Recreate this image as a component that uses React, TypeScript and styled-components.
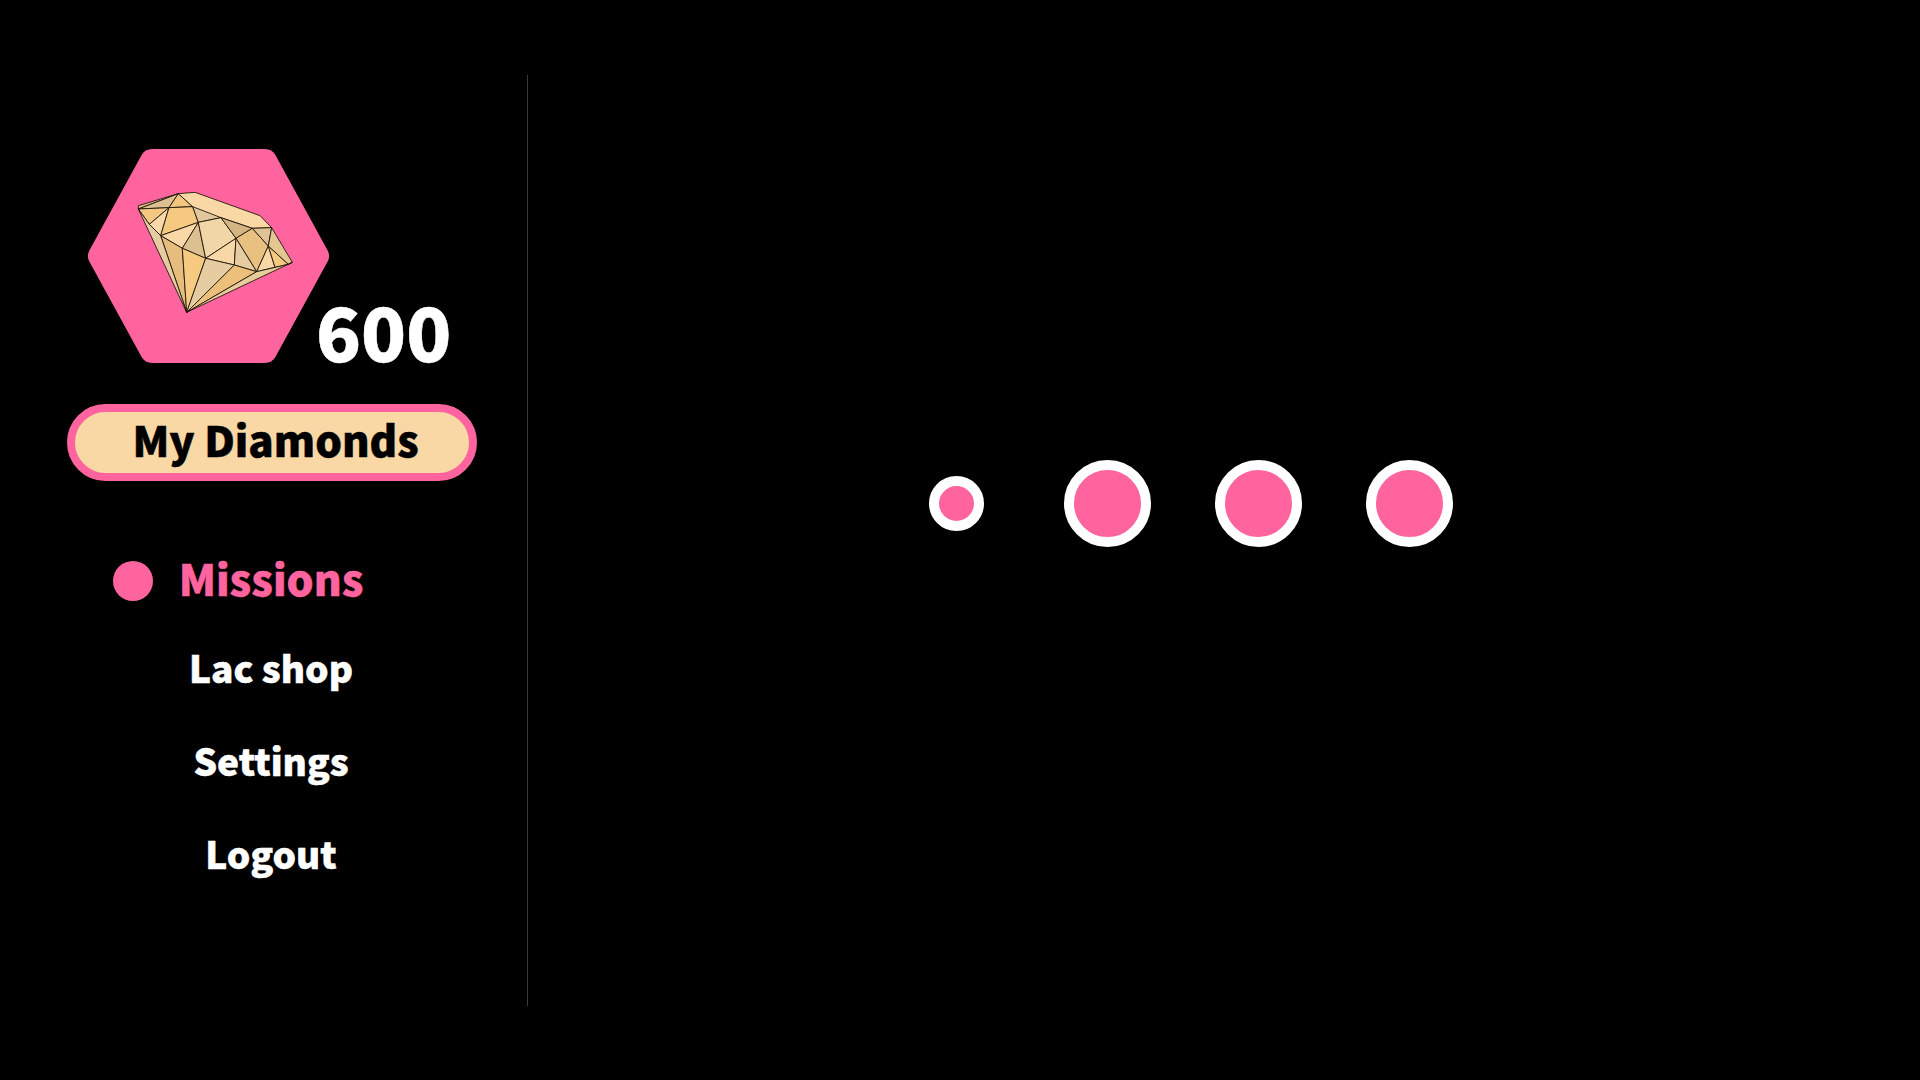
import styled, { createGlobalStyle } from "styled-components"

const PINK = "#ff649f"
const CREAM = "#f9d8a6"

const GlobalStyle = createGlobalStyle`
    html, body {
        margin: 0;
        background: #000;
    }
    * {
        box-sizing: border-box;
    }
`

const Page = styled.div`
    display: flex;
    width: 1920px;
    height: 1080px;
    padding-top: 75px;
    background: #000;
    font-family: "Noto Sans CJK KR", "Noto Sans", sans-serif;
    font-weight: 900;
    -webkit-text-stroke: 0.5px currentColor;
    overflow: hidden;
`

const Sidebar = styled.aside`
    width: 528px;
    height: 931px;
    padding: 74px 0 0 67px;
    border-right: 1px solid #3a3a3a;
    flex-shrink: 0;
`

const Balance = styled.div`
    display: flex;
    align-items: flex-end;
    height: 214px;
    padding-left: 21px;
`

const Count = styled.div`
    margin-left: -13px;
    padding-bottom: 5px;
    color: #fff;
    font-size: 74px;
    line-height: 57px;
`

const Pill = styled.div`
    display: flex;
    align-items: center;
    justify-content: center;
    width: 410px;
    height: 77px;
    margin-top: 41px;
    padding: 0 0 7px 7px;
    border: 8px solid ${PINK};
    border-radius: 39px;
    background: ${CREAM};
    color: #000;
    font-size: 42px;
    line-height: 1;
`

const Nav = styled.nav`
    display: flex;
    flex-direction: column;
    align-items: center;
    width: 410px;
    margin-top: 58px;
`

const NavItem = styled.div<{ $active?: boolean }>`
    position: relative;
    display: flex;
    align-items: center;
    justify-content: center;
    width: 100%;
    height: ${(p) => (p.$active ? "86px" : "93px")};
    padding: 0 2px 9px 0;
    color: ${(p) => (p.$active ? PINK : "#fff")};
    font-size: ${(p) => (p.$active ? "42.5px" : "37px")};
`

const ActiveDot = styled.span`
    position: absolute;
    left: 46px;
    top: 50%;
    width: 40px;
    height: 40px;
    margin-top: -21px;
    border-radius: 50%;
    background: ${PINK};
`

const Main = styled.main`
    flex: 1;
    padding: 385px 0 0 385px;
`

const Steps = styled.div`
    display: flex;
    align-items: center;
    gap: 64px;
`

const Slot = styled.div`
    display: flex;
    align-items: center;
    justify-content: center;
    width: 87px;
    height: 87px;
`

const Step = styled.div<{ $current?: boolean }>`
    width: ${(p) => (p.$current ? "55px" : "87px")};
    height: ${(p) => (p.$current ? "55px" : "87px")};
    border: 10px solid #fff;
    border-radius: 50%;
    background: ${PINK};
`

const facets: [string, string][] = [
    ["55,92 175,56 55,102", "#dcbf8c"],
    ["55,102 147,98 175,56", "#dcc08f"],
    ["147,98 175,56 218,95", "#f3c57f"],
    ["175,56 225,52 420,122 455,158 397,160 303,128 235,142 218,95", "#f9d8a6"],
    ["55,102 147,98 88,148", "#f5c882"],
    ["88,148 147,98 122,182", "#f8d8a8"],
    ["147,98 218,95 235,142 122,182", "#f6c981"],
    ["218,95 303,128 235,142", "#e3c79c"],
    ["122,182 235,142 187,220", "#f8d8a6"],
    ["235,142 257,250 187,220", "#dcc092"],
    ["235,142 303,128 348,190 257,250", "#f1d6a8"],
    ["303,128 397,160 348,190", "#d5b584"],
    ["397,160 445,213 410,290 348,190", "#e8c07f"],
    ["397,160 455,158 445,213", "#dfc295"],
    ["257,250 348,190 343,270", "#f8d8a6"],
    ["348,190 410,290 343,270", "#e6cca1"],
    ["445,213 465,277 410,290", "#f8d8a6"],
    ["445,213 505,268 465,277", "#f6c981"],
    ["455,158 517,262 505,268 445,213", "#e3c690"],
    ["122,182 187,220 200,412", "#e6bd7c"],
    ["187,220 257,250 200,412", "#f7ca81"],
    ["257,250 343,270 200,412", "#e6cca1"],
    ["343,270 410,290 200,412", "#ecc07a"],
    ["410,290 505,268 517,262 200,412", "#e8cc99"],
    ["55,102 88,148 122,182 200,412", "#e6cca1"],
]

const Gem = () => (
    <svg width="241" height="214" viewBox="0 0 241 214">
        <polygon
            points="64,12 177,12 229,107 177,202 64,202 12,107"
            fill={PINK}
            stroke={PINK}
            strokeWidth="24"
            strokeLinejoin="round"
        />
        <g transform="translate(32 26) scale(0.3333)" stroke="#1a1208" strokeWidth="2.6" strokeLinejoin="round">
            {facets.map(([points, fill]) => (
                <polygon key={points} points={points} fill={fill} />
            ))}
        </g>
    </svg>
)

const App = () => {
    return (
        <Page>
            <GlobalStyle />
            <Sidebar>
                <Balance>
                    <Gem />
                    <Count>600</Count>
                </Balance>
                <Pill>My Diamonds</Pill>
                <Nav>
                    <NavItem $active>
                        <ActiveDot />
                        Missions
                    </NavItem>
                    <NavItem>Lac shop</NavItem>
                    <NavItem>Settings</NavItem>
                    <NavItem>Logout</NavItem>
                </Nav>
            </Sidebar>
            <Main>
                <Steps>
                    <Slot><Step $current /></Slot>
                    <Slot><Step /></Slot>
                    <Slot><Step /></Slot>
                    <Slot><Step /></Slot>
                </Steps>
            </Main>
        </Page>
    )
}

export default App
